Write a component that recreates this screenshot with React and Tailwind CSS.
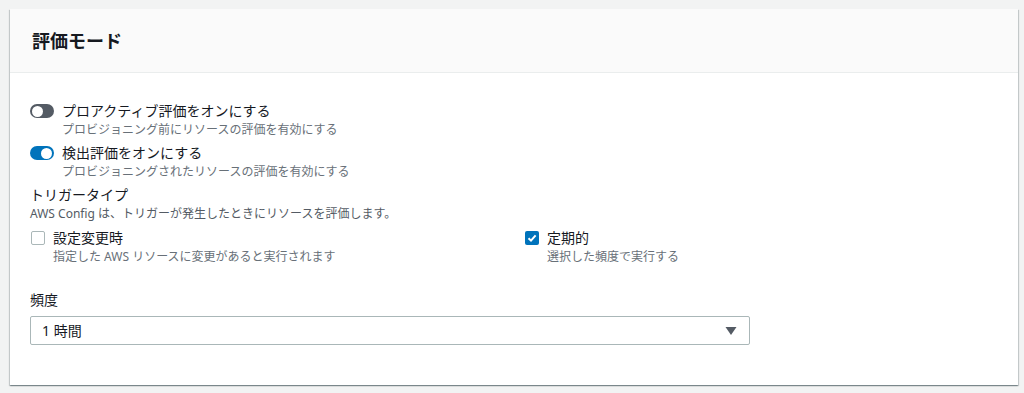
export default function App() {
  return (
    <div
      className="w-[1024px] h-[393px] bg-[#f2f3f3] pt-[9px] pl-[10px] overflow-hidden"
      style={{ fontFamily: '"Noto Sans", "Noto Sans CJK JP", sans-serif' }}
    >
      <div className="w-[1008px] bg-white shadow-[0_1px_1px_0_rgba(0,28,36,0.3),1px_1px_1px_0_rgba(0,28,36,0.15),-1px_1px_1px_0_rgba(0,28,36,0.15)]">
        <div className="h-[64px] bg-[#fafafa] border-b border-[#eaeded] px-[22px] flex items-center">
          <h2 className="text-[18px] font-bold text-[#16191f] leading-none">評価モード</h2>
        </div>

        <div className="px-[20px] pt-[28px] pb-[40px] text-[#16191f]">
          <div className="flex items-start gap-[8px]">
            <div className="mt-[3px] w-[24px] h-[14px] rounded-full bg-[#545b64] flex items-center pl-[2px]">
              <span className="block w-[11px] h-[11px] rounded-full bg-white"></span>
            </div>
            <div>
              <p className="text-[14px] leading-[20px]">プロアクティブ評価をオンにする</p>
              <p className="text-[12px] leading-[18px] text-[#687078]">プロビジョニング前にリソースの評価を有効にする</p>
            </div>
          </div>

          <div className="flex items-start gap-[8px] mt-[4px]">
            <div className="mt-[3px] w-[24px] h-[14px] rounded-full bg-[#0073bb] flex items-center justify-end pr-[2px]">
              <span className="block w-[11px] h-[11px] rounded-full bg-white"></span>
            </div>
            <div>
              <p className="text-[14px] leading-[20px]">検出評価をオンにする</p>
              <p className="text-[12px] leading-[18px] text-[#687078]">プロビジョニングされたリソースの評価を有効にする</p>
            </div>
          </div>

          <p className="text-[14px] leading-[20px] mt-[4px]">トリガータイプ</p>
          <p className="text-[12px] leading-[18px] text-[#545b64]">AWS Config は、トリガーが発生したときにリソースを評価します。</p>

          <div className="grid grid-cols-2 gap-[20px] mt-[5px]">
            <div className="flex items-start gap-[8px] pl-[1px]">
              <span className="mt-[3px] block w-[14px] h-[14px] rounded-[2px] border border-[#aab7b8] bg-white"></span>
              <div>
                <p className="text-[14px] leading-[20px]">設定変更時</p>
                <p className="text-[12px] leading-[18px] text-[#687078]">指定した AWS リソースに変更があると実行されます</p>
              </div>
            </div>
            <div className="flex items-start gap-[8px] pl-[1px]">
              <span className="mt-[3px] flex items-center justify-center w-[14px] h-[14px] rounded-[2px] bg-[#0073bb]">
                <svg width="10" height="10" viewBox="0 0 10 10">
                  <path d="M1.5 5.2 L4 7.6 L8.6 2.4" fill="none" stroke="white" strokeWidth="2" />
                </svg>
              </span>
              <div>
                <p className="text-[14px] leading-[20px]">定期的</p>
                <p className="text-[12px] leading-[18px] text-[#687078]">選択した頻度で実行する</p>
              </div>
            </div>
          </div>

          <p className="text-[14px] leading-[20px] mt-[24px]">頻度</p>
          <div className="mt-[6px] w-[720px] h-[29px] border border-[#aab7b8] rounded-[2px] flex items-center justify-between pl-[11px] pr-[12px]">
            <span className="text-[14px]">1 時間</span>
            <svg width="12" height="10" viewBox="0 0 12 10">
              <path d="M0.5 1 L11.5 1 L6 9 Z" fill="#545b64" />
            </svg>
          </div>
        </div>
      </div>
    </div>
  );
}
